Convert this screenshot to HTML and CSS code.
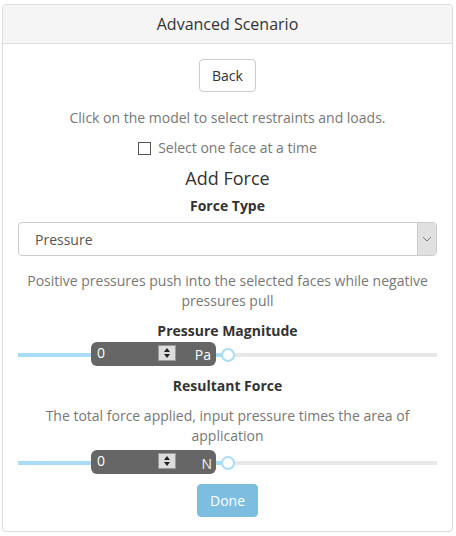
FILE: index.html
```html
<!DOCTYPE html>
<html lang="en">
<head>
    <meta charset="UTF-8">
    <meta name="viewport" content="width=device-width, initial-scale=1.0">
    <title>Advanced Scenario</title>
    <link rel="stylesheet" href="styles.css">
</head>
<body>
    <div class="panel">
        <div class="panel-heading">Advanced Scenario</div>
        <div class="panel-body">
            <div class="center">
                <button type="button" class="btn">Back</button>
            </div>
            <p class="hint hint-top">Click on the model to select restraints and loads.</p>
            <label class="check">
                <span class="box"></span>
                Select one face at a time
            </label>
            <h3>Add Force</h3>
            <div class="label label-type">Force Type</div>
            <div class="select">
                <span>Pressure</span>
                <span class="caret">
                    <svg width="10" height="6" viewBox="0 0 10 6"><path d="M1 1 L5 5 L9 1" fill="none" stroke="#777" stroke-width="1"/></svg>
                </span>
            </div>
            <p class="hint hint-select">Positive pressures push into the selected faces while negative pressures pull</p>

            <div class="label label-group">Pressure Magnitude</div>
            <div class="slider">
                <div class="track"><div class="fill" style="width: 50%"></div></div>
                <div class="value" style="left: 73px">
                    <span class="num">0</span>
                    <span class="spin"><i class="up"></i><i class="down"></i></span>
                    <span class="unit">Pa</span>
                </div>
                <div class="thumb" style="left: 50%"></div>
            </div>

            <div class="label label-after-slider">Resultant Force</div>
            <p class="hint hint-label">The total force applied, input pressure times the area of application</p>
            <div class="slider slider-after-hint">
                <div class="track"><div class="fill" style="width: 50%"></div></div>
                <div class="value" style="left: 73px">
                    <span class="num">0</span>
                    <span class="spin"><i class="up"></i><i class="down"></i></span>
                    <span class="unit unit-n">N</span>
                </div>
                <div class="thumb" style="left: 50%"></div>
            </div>

            <div class="center done-row">
                <button type="button" class="btn btn-done" disabled>Done</button>
            </div>
        </div>
    </div>
</body>
</html>
```

FILE: styles.css
```css
body {
    font-family: "Open Sans", Arial, sans-serif;
    font-size: 14px;
    color: #333;
    margin: 0;
    padding: 4px 3px 0 2px;
}
.panel {
    border: 1px solid #ddd;
    border-radius: 4px;
    box-shadow: 0 1px 1px rgba(0, 0, 0, 0.05);
    height: 528px;
    box-sizing: border-box;
}
.panel-heading {
    background: #f5f5f5;
    border-bottom: 1px solid #ddd;
    border-radius: 3px 3px 0 0;
    text-align: center;
    font-size: 16px;
    height: 38px;
    line-height: 38px;
}
.panel-body {
    padding: 15px 15px;
    text-align: center;
}
.center {
    text-align: center;
}
.btn {
    font-family: inherit;
    font-size: 14px;
    color: #333;
    background: #fff;
    border: 1px solid #ccc;
    border-radius: 4px;
    padding: 6px 12px;
    line-height: 19px;
}
.btn-done {
    background: #7dbde0;
    border-color: #7dbde0;
    color: #fff;
    padding: 6px 12px;
}
.done-row {
    margin-top: 8px;
}
.hint {
    color: #777;
    margin: 12px 0 0;
    line-height: 20px;
}
.hint-top {
    margin-top: 16px;
}
.hint-select {
    margin-top: 15px;
}
.hint-label {
    margin-top: 10px;
}
.check {
    display: flex;
    justify-content: center;
    align-items: center;
    gap: 7px;
    color: #777;
    margin-top: 10px;
    line-height: 20px;
}
.box {
    width: 11px;
    height: 11px;
    border: 1px solid #555;
    display: inline-block;
}
h3 {
    font-size: 18px;
    font-weight: normal;
    margin: 8px 0 0;
    line-height: 24px;
}
.label {
    font-weight: bold;
    margin-top: 6px;
    line-height: 20px;
}
.label-type {
    margin-top: 6px;
}
.label-group {
    margin-top: 10px;
}
.label-after-slider {
    margin-top: 8px;
}
.select {
    display: flex;
    align-items: center;
    justify-content: space-between;
    height: 34px;
    box-sizing: border-box;
    border: 1px solid #ccc;
    border-radius: 4px;
    margin-top: 6px;
    padding-left: 16px;
    color: #555;
    text-align: left;
    overflow: hidden;
}
.caret {
    width: 18px;
    height: 100%;
    background: #e0e0e0;
    border-left: 1px solid #ccc;
    display: flex;
    align-items: center;
    justify-content: center;
}
.slider {
    position: relative;
    height: 26px;
    margin-top: 1px;
}
.slider-after-hint {
    margin-top: 4px;
}
.track {
    position: absolute;
    left: 0;
    right: 0;
    top: 11px;
    height: 4px;
    background: #e8e8e8;
}
.fill {
    height: 100%;
    background: #a9dcf6;
}
.thumb {
    position: absolute;
    top: 6px;
    width: 10px;
    height: 10px;
    margin-left: -7px;
    border: 2px solid #a9dcf6;
    border-radius: 50%;
    background: #fff;
}
.value {
    position: absolute;
    top: 0;
    width: 125px;
    height: 24px;
    background: #666;
    border-radius: 6px;
    color: #fff;
    font-size: 14px;
}
.num {
    position: absolute;
    left: 6px;
    top: 1px;
}
.unit {
    position: absolute;
    right: 5px;
    top: 3px;
}
.unit-n {
    right: 4px;
    top: 4px;
    color: #f3f3f3;
}
.spin {
    position: absolute;
    left: 67px;
    top: 3px;
    width: 16px;
    height: 14px;
    background: #ddd;
    border: 1px solid #999;
    display: flex;
    flex-direction: column;
    align-items: center;
    justify-content: center;
    gap: 2px;
}
.spin i {
    width: 0;
    height: 0;
    border-left: 3px solid transparent;
    border-right: 3px solid transparent;
}
.spin .up {
    border-bottom: 4px solid #222;
}
.spin .down {
    border-top: 4px solid #222;
}
```
